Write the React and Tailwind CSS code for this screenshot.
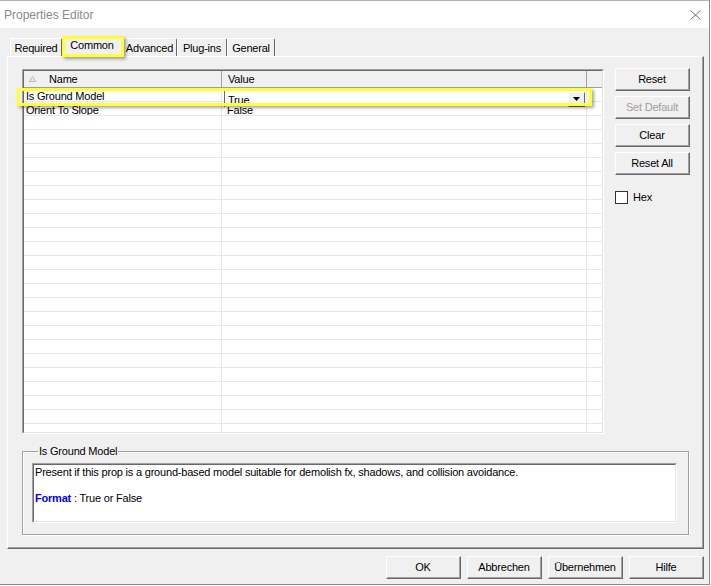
import React from 'react';

const tabs = [
  { label: 'Required', cls: 'w-[52px]' },
  { label: 'Common', cls: 'w-[60px]', active: true },
  { label: 'Advanced', cls: 'w-[55px]' },
  { label: 'Plug-ins', cls: 'w-[50px]' },
  { label: 'General', cls: 'w-[48px]' },
];

const rows = [
  ['Is Ground Model', ''],
  ['Orient To Slope', 'False'],
  ...Array.from({ length: 23 }, () => ['', '']),
];

// klassischer 3D-Button (Windows-Stil)
const Btn = ({ children, disabled }) => (
  <div className="w-[75px] h-[23px] border-t border-l border-white border-r border-b border-r-[#696969] border-b-[#696969]">
    <div className="w-full h-full border-r border-b border-r-[#a0a0a0] border-b-[#a0a0a0] bg-[#f0f0f0] flex items-center justify-center">
      <span className={disabled ? 'text-[#a0a0a0]' : 'text-black'}>{children}</span>
    </div>
  </div>
);

const App = () => {
  return (
    <div className="relative w-[711px] h-[586px] bg-white overflow-hidden text-[11px] tracking-[-0.2px] leading-[14px] text-black font-['Liberation_Sans',Arial,sans-serif]">
      <div className="w-[710px] h-[585px] border-r border-b border-[#8c8c8c] flex flex-col">
        {/* Titelleiste */}
        <div className="h-[28px] bg-white border-t border-[#b4b4b4] flex items-center justify-between pl-[4px] pr-[8px]">
          <span className="text-[12px] tracking-normal text-[#8a8a8a]">Properties Editor</span>
          <svg width="11" height="10" viewBox="0 0 11 10">
            <path d="M0.5 0.5 L10.5 9.5 M10.5 0.5 L0.5 9.5" stroke="#6e6e6e" strokeWidth="1" fill="none" />
          </svg>
        </div>

        <div className="flex-1 bg-[#f0f0f0] flex flex-col">
          {/* Reiter */}
          <div className="flex items-end h-[28px] pl-[10px]">
            {tabs.map(t => (
              <div
                key={t.label}
                className={`${t.cls} ${t.active ? 'h-[21px] -mb-px z-10 items-start pt-[1px]' : 'h-[18px] items-center'} bg-[#f0f0f0] border-t border-l border-white border-r border-r-[#696969] rounded-t-[2px] flex justify-center`}
              >
                {t.label}
              </div>
            ))}
          </div>

          {/* Reiter-Inhalt */}
          <div className="ml-[7px] w-[697px] h-[493px] border-t border-l border-white border-r border-b border-r-[#696969] border-b-[#696969]">
            <div className="w-full h-full border-r border-b border-r-[#a0a0a0] border-b-[#a0a0a0] pl-[14px] pt-[12px] flex flex-col">
              <div className="flex">
                {/* Eigenschaftsliste */}
                <div className="w-[582px] h-[365px] border border-t-[#a0a0a0] border-l-[#a0a0a0] border-r-white border-b-white">
                  <div className="relative w-full h-full border border-t-[#696969] border-l-[#696969] border-r-[#e3e3e3] border-b-[#e3e3e3] bg-white overflow-hidden">
                    <div className="flex h-[17px] bg-[#f0f0f0] border-b border-[#a0a0a0]">
                      <div className="w-[198px] border-r border-[#a0a0a0] flex items-center">
                        <svg width="7" height="6" viewBox="0 0 7 6" className="ml-[5px]">
                          <path d="M3.5 0.5 L6.5 5.5 L0.5 5.5 Z" stroke="#b4b4b4" fill="none" />
                        </svg>
                        <span className="ml-[13px]">Name</span>
                      </div>
                      <div className="w-[365px] border-r border-[#a0a0a0] flex items-center pl-[6px]">Value</div>
                      <div className="flex-1" />
                    </div>
                    {rows.map((r, i) => (
                      <div key={i} className="flex h-[14px] border-b border-[#e8e8e8]">
                        <div className="w-[198px] border-r border-[#e8e8e8] pl-[2px] leading-[16px] overflow-hidden whitespace-nowrap">{r[0]}</div>
                        <div className="w-[365px] border-r border-[#e8e8e8] pl-[5px] leading-[16px] overflow-hidden">{r[1]}</div>
                        <div className="flex-1" />
                      </div>
                    ))}

                    {/* Dropdown-Editor über der Zelle */}
                    <div className="absolute left-[200px] top-[19px] w-[361px] h-[17px] bg-white border-t border-l border-[#696969] flex items-center">
                      <span className="pl-[3px] pt-[2px]">True</span>
                      <div className="ml-auto w-[17px] h-[15px] bg-[#f0f0f0] border-t border-l border-white border-r border-b border-r-[#696969] border-b-[#696969] flex items-center justify-center">
                        <svg width="7" height="4" viewBox="0 0 7 4">
                          <path d="M0 0 L7 0 L3.5 4 Z" fill="#000" />
                        </svg>
                      </div>
                    </div>
                  </div>
                </div>

                {/* Schaltflächen rechts */}
                <div className="ml-[11px] -mt-[1px] flex flex-col gap-[5px]">
                  <Btn>Reset</Btn>
                  <Btn disabled>Set Default</Btn>
                  <Btn>Clear</Btn>
                  <Btn>Reset All</Btn>
                  <div className="mt-[10px] flex items-center">
                    <div className="w-[13px] h-[13px] bg-white border border-[#333333]" />
                    <span className="ml-[5px]">Hex</span>
                  </div>
                </div>
              </div>

              {/* Beschreibung */}
              <fieldset className="mt-[10px] w-[667px] h-[91px] border border-[#a0a0a0] shadow-[inset_1px_1px_0_#ffffff,1px_1px_0_#ffffff] pl-[9px]">
                <legend className="ml-[6px] px-[1px]">Is Ground Model</legend>
                <div className="mt-[5px] w-[645px] h-[60px] border border-t-[#a0a0a0] border-l-[#a0a0a0] border-r-white border-b-white">
                  <div className="w-full h-full border border-t-[#696969] border-l-[#696969] border-r-[#e3e3e3] border-b-[#e3e3e3] bg-white pl-[1px] pt-[1px] leading-[13px]">
                    <p>Present if this prop is a ground-based model suitable for demolish fx, shadows, and collision avoidance.</p>
                    <p className="mt-[13px]">
                      <b className="text-[#0000ff]">Format</b>
                      <span className="text-[#000080]"> :</span> True or False
                    </p>
                  </div>
                </div>
              </fieldset>
            </div>
          </div>

          {/* Dialog-Schaltflächen */}
          <div className="mt-[7px] flex justify-end gap-[6px] pr-[5px]">
            <Btn>OK</Btn>
            <Btn>Abbrechen</Btn>
            <Btn>Übernehmen</Btn>
            <Btn>Hilfe</Btn>
          </div>
        </div>
      </div>

      {/* gelbe Markierungen (Annotation) */}
      <div className="absolute z-20 left-[62px] top-[36px] w-[62px] h-[21px] border-[3px] border-[#ffff33] shadow-[2px_2px_3px_rgba(0,0,0,0.35)]" />
      <div className="absolute z-20 left-[17px] top-[88px] w-[575px] h-[18px] border-[3px] border-[#ffff33] shadow-[2px_2px_3px_rgba(0,0,0,0.35)]" />
    </div>
  );
};

export default App;
